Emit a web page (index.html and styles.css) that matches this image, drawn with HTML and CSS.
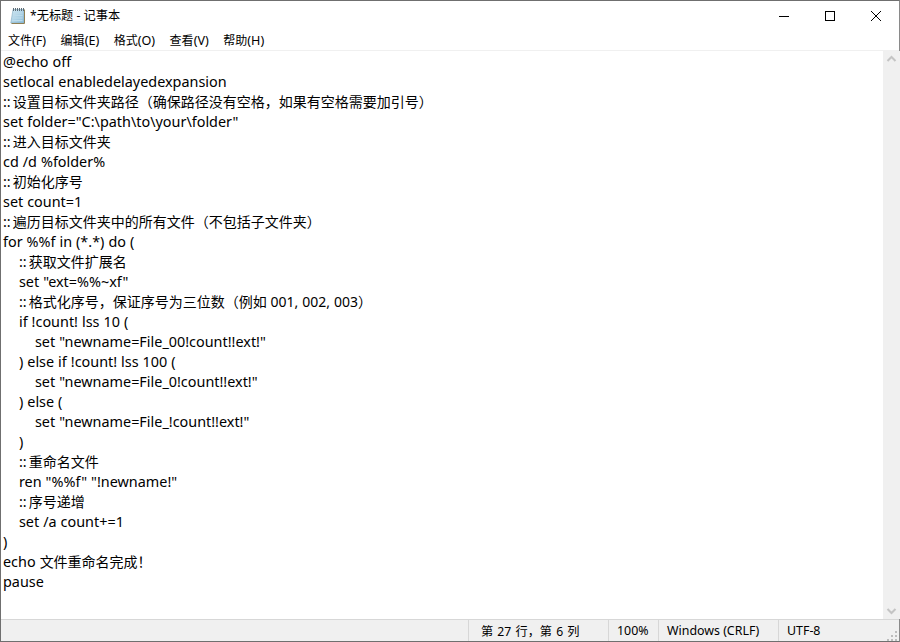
FILE: index.html
```html
<!DOCTYPE html>
<html lang="zh-CN">
<head>
<meta charset="utf-8">
<title>*无标题 - 记事本</title>
<link rel="stylesheet" href="styles.css">
</head>
<body>
<div class="window">
  <header class="titlebar">
    <svg class="app-icon" width="16" height="18" viewBox="0 0 16 18">
      <defs>
        <linearGradient id="page" x1="0" y1="0" x2="1" y2="1">
          <stop offset="0" stop-color="#d3e9f4"/>
          <stop offset="1" stop-color="#8dbdd8"/>
        </linearGradient>
      </defs>
      <path d="M3 2.500h11v13.500H.8z" fill="url(#page)" stroke="#7fa9c0" stroke-width=".6"/>
      <path d="M14.500 2.500v14H1.500" fill="none" stroke="#8f7f55"/>
      <path d="M3.500 6h9M3 8.500h9.500M2.500 11h10M2 13.500h10.500" stroke="#bddbea"/>
      <path d="M3.500 1v3M5.500 1v3M7.500 1v3M9.500 1v3M11.500 1v3M13.500 1v3" stroke="#5c6b75"/>
    </svg>
    <span class="title">*无标题 - 记事本</span>
    <div class="controls">
      <button class="ctl"><svg width="10" height="10" viewBox="0 0 10 10"><path d="M0 5.500h10" stroke="#000"/></svg></button>
      <button class="ctl"><svg width="10" height="10" viewBox="0 0 10 10"><rect x=".5" y=".5" width="9" height="9" fill="none" stroke="#000"/></svg></button>
      <button class="ctl"><svg width="10" height="10" viewBox="0 0 10 10"><path d="M0 0l10 10M10 0L0 10" stroke="#000"/></svg></button>
    </div>
  </header>
  <nav class="menubar">
    <span class="menu"><span class="zh">文件</span>(F)</span>
    <span class="menu"><span class="zh">编辑</span>(E)</span>
    <span class="menu"><span class="zh">格式</span>(O)</span>
    <span class="menu"><span class="zh">查看</span>(V)</span>
    <span class="menu"><span class="zh">帮助</span>(H)</span>
  </nav>
  <main class="body">
    <div class="editor">
      <div class="line">@echo off</div>
      <div class="line">setlocal enabledelayedexpansion</div>
      <div class="line"><span class="mark">:: </span><span class="zh">设置目标文件夹路径（确保路径没有空格，如果有空格需要加引号）</span></div>
      <div class="line">set folder="C:\path\to\your\folder"</div>
      <div class="line"><span class="mark">:: </span><span class="zh">进入目标文件夹</span></div>
      <div class="line">cd /d %folder%</div>
      <div class="line"><span class="mark">:: </span><span class="zh">初始化序号</span></div>
      <div class="line">set count=1</div>
      <div class="line"><span class="mark">:: </span><span class="zh">遍历目标文件夹中的所有文件（不包括子文件夹）</span></div>
      <div class="line">for %%f in (*.*) do (</div>
      <div class="line">    <span class="mark">:: </span><span class="zh">获取文件扩展名</span></div>
      <div class="line">    set "ext=%%~xf"</div>
      <div class="line">    <span class="mark">:: </span><span class="zh">格式化序号，保证序号为三位数（例如 001, 002, 003）</span></div>
      <div class="line">    if !count! lss 10 (</div>
      <div class="line">        set "newname=File_00!count!!ext!"</div>
      <div class="line">    ) else if !count! lss 100 (</div>
      <div class="line">        set "newname=File_0!count!!ext!"</div>
      <div class="line">    ) else (</div>
      <div class="line">        set "newname=File_!count!!ext!"</div>
      <div class="line">    )</div>
      <div class="line">    <span class="mark">:: </span><span class="zh">重命名文件</span></div>
      <div class="line">    ren "%%f" "!newname!"</div>
      <div class="line">    <span class="mark">:: </span><span class="zh">序号递增</span></div>
      <div class="line">    set /a count+=1</div>
      <div class="line">)</div>
      <div class="line">echo <span class="zh">文件重命名完成！</span></div>
      <div class="line">pause</div>
    </div>
    <div class="scrollbar">
      <svg width="17" height="17" viewBox="0 0 17 17"><path d="M4.500 10l4-4 4 4" fill="none" stroke="#c4c4c4" stroke-width="2"/></svg>
      <svg width="17" height="17" viewBox="0 0 17 17"><path d="M4.500 7l4 4 4-4" fill="none" stroke="#c4c4c4" stroke-width="2"/></svg>
    </div>
  </main>
  <footer class="status">
    <span class="cell cell-pos"><span class="zh-pos">第 27 行，第 6 列</span></span>
    <span class="cell cell-zoom">100%</span>
    <span class="cell cell-eol">Windows (CRLF)</span>
    <span class="cell cell-enc">UTF-8</span>
    <svg class="grip" width="12" height="12" viewBox="0 0 12 12"><path d="M9 2h2v2H9zM5 6h2v2H5zM9 6h2v2H9zM1 10h2v2H1zM5 10h2v2H5zM9 10h2v2H9z" fill="#bcbcbc"/></svg>
  </footer>
</div>
</body>
</html>
```
FILE: styles.css
```css
* { box-sizing: border-box; }
html, body { margin: 0; padding: 0; }
body {
  width: 900px;
  height: 642px;
  overflow: hidden;
  background: #fff;
  font-family: "Noto Sans", "Noto Sans CJK SC", sans-serif;
  color: #000;
}
.window {
  width: 900px;
  height: 642px;
  display: flex;
  flex-direction: column;
  border: 1px solid #6f6f6f;
  border-right-color: #8a8a8a;
  background: #fff;
}
.titlebar {
  height: 29px;
  display: flex;
  align-items: center;
  padding-left: 9px;
  flex: none;
}
.app-icon { flex: none; margin-right: 4px; }
.title { font-size: 12.2px; line-height: 16px; }
.controls { margin-left: auto; display: flex; }
.ctl {
  width: 46px;
  height: 29px;
  border: 0;
  padding: 0;
  background: none;
  display: flex;
  align-items: center;
  justify-content: center;
}
.menubar {
  height: 20px;
  display: flex;
  align-items: center;
  flex: none;
  padding: 2px 0 0 7px;
  gap: 14.5px;
  font-size: 12.6px;
}
.menu { line-height: 18px; }
.menu .zh { font-size: 12px; }
.body {
  flex: 1;
  min-height: 0;
  display: flex;
  border-top: 1px solid #f0f0f0;
}
.editor {
  flex: 1;
  padding: 1px 0 0 2px;
  overflow: hidden;
  font-size: 14.4px;
  word-spacing: .25px;
}
.line { height: 20px; line-height: 20px; white-space: pre; }
.zh { font-size: 14px; line-height: 1; }
.mark { word-spacing: -1.75px; }
.scrollbar {
  width: 17px;
  flex: none;
  background: #f0f0f0;
  display: flex;
  flex-direction: column;
  justify-content: space-between;
  margin-right: -1px;
}
.status {
  height: 22px;
  flex: none;
  display: flex;
  align-items: center;
  position: relative;
  background: #f0f0f0;
  border-top: 1px solid #d7d7d7;
  font-size: 12.4px;
  padding-left: 467px;
}
.cell {
  height: 100%;
  display: flex;
  align-items: center;
  border-left: 1px solid #d7d7d7;
  padding-left: 12px;
}
.zh-pos { word-spacing: 1px; font-size: 12.2px; }
.cell-pos { width: 140px; }
.cell-zoom { width: 50px; padding-left: 8px; }
.cell-eol { width: 120px; padding-left: 8px; }
.cell-enc { flex: 1; padding-left: 8px; }
.grip { position: absolute; right: 1px; bottom: 0; }
```
